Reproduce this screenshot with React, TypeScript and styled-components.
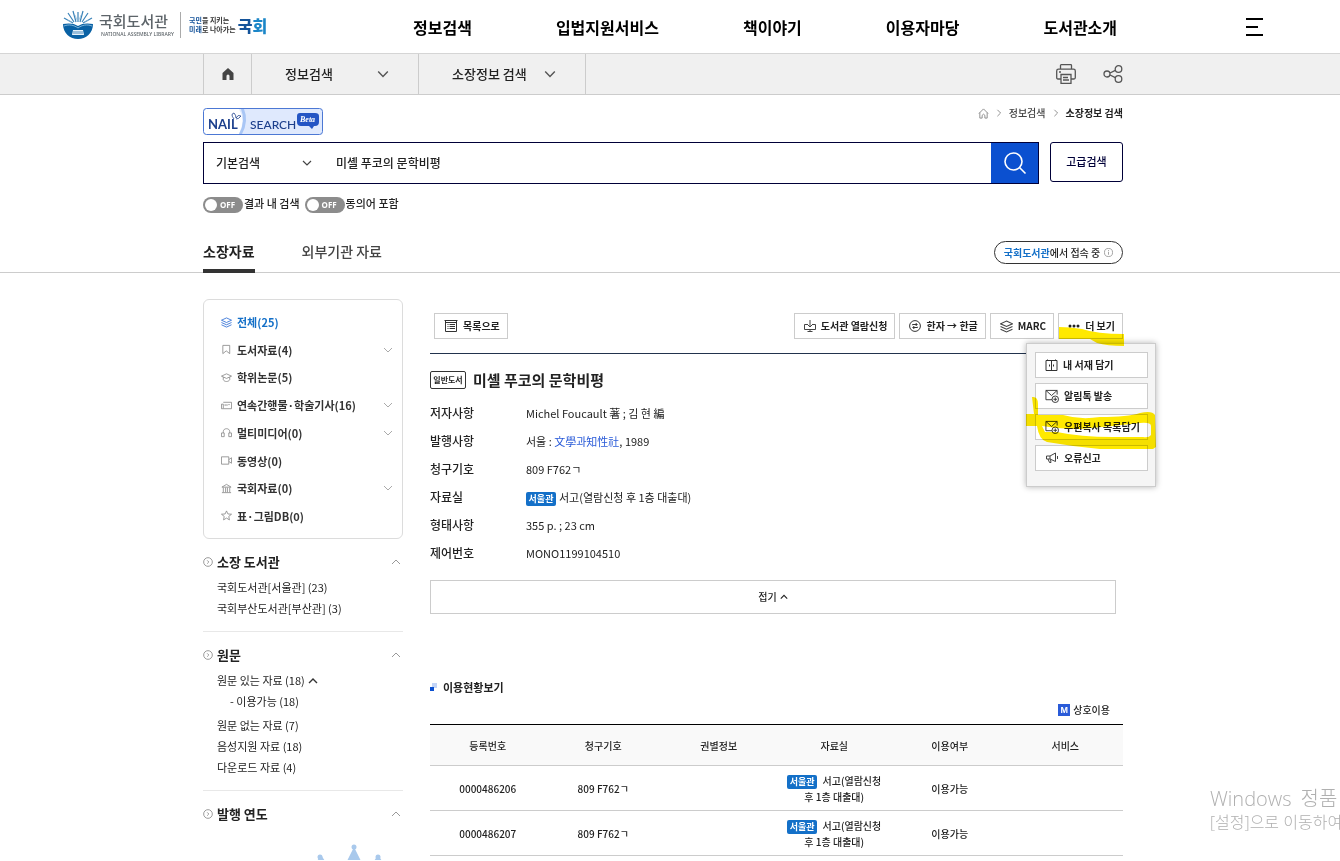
import React from "react";
import styled, { createGlobalStyle, css } from "styled-components";

const GlobalStyle = createGlobalStyle`
  *, *::before, *::after { box-sizing: border-box; }
  body {
    margin: 0;
    background: #fff;
    color: #222;
    font-family: "Noto Sans CJK KR", "Noto Sans", sans-serif;
    font-size: 12px;
    line-height: 20px;
  }
  a { color: inherit; text-decoration: none; }
  button, input, select { font: inherit; color: inherit; }
  button { cursor: pointer; }
  h1, h2, h3, ul, dl, dd, p { margin: 0; padding: 0; }
  ul { list-style: none; }
  svg { display: block; flex: none; }
`;

/* ---------- shared ---------- */

const Page = styled.div`
  position: relative;
  min-height: 100vh;
  overflow: hidden;
`;

const Band = styled.div`
  padding-right: 14px;
`;

const Container = styled.div<{ $wide?: boolean }>`
  max-width: ${(p) => (p.$wide ? 1200 : 920)}px;
  margin: 0 auto;
`;

type Dir = "up" | "down" | "right";
const chevronPaths: Record<Dir, string> = {
  down: "M1 3 L5 7 L9 3",
  up: "M1 7 L5 3 L9 7",
  right: "M3 1 L7 5 L3 9",
};
const Chevron = ({ dir, size = 10, color = "#999", weight = 1 }: { dir: Dir; size?: number; color?: string; weight?: number }) => (
  <svg width={size} height={size} viewBox="0 0 10 10" fill="none" stroke={color} strokeWidth={weight} aria-hidden="true">
    <path d={chevronPaths[dir]} />
  </svg>
);

/* ---------- header ---------- */

const Header = styled(Band)`
  border-bottom: 1px solid #d5d5d5;
`;
const HeaderRow = styled(Container)`
  display: flex;
  align-items: center;
  height: 53px;
`;
const Brand = styled.a`
  display: flex;
  align-items: center;
  flex: 0 0 350px;
  padding-bottom: 4px;
`;
const BrandName = styled.span`
  display: flex;
  flex-direction: column;
  margin-left: 6px;
  width: 82px;
  border-right: 1px solid #aaa;
  color: #5d6469;
  font-size: 15px;
  font-weight: 500;
  line-height: 18px;
`;
const BrandSub = styled.span`
  padding-left: 2px;
  font-family: "Noto Sans", sans-serif;
  font-size: 5px;
  font-weight: 500;
  line-height: 8px;
  white-space: nowrap;
`;
const Slogan = styled.span`
  margin-left: 8px;
  color: #333;
  font-size: 7px;
  font-weight: 700;
  line-height: 9px;
  white-space: nowrap;
  em { color: #14539a; font-style: normal; }
`;
const SloganMark = styled.span`
  margin-left: 2px;
  color: #14539a;
  font-size: 16px;
  font-weight: 900;
  line-height: 20px;
  span { color: #1b86c8; }
`;
const MainNav = styled.nav`
  display: flex;
  flex: 1;
  gap: 84px;
  font-size: 16px;
  font-weight: 700;
  line-height: 24px;
  white-space: nowrap;
  color: #000;
`;
const MenuButton = styled.button`
  padding: 0;
  border: 0;
  background: none;
`;

const Emblem = () => (
  <svg width="30" height="30" viewBox="0 0 30 30" aria-hidden="true">
    <g stroke="#3b83b8" strokeWidth="1.2" fill="none">
      <path d="M15 12V2M13 12L10 1M17 12L20 1M11 12L5 3M19 12L25 3M10 13L1 8M20 13L29 8" />
      <path d="M14 10L12 5M16 10L18 5M9 12L4 10M21 12L26 10" strokeWidth=".7" stroke="#8fb9d8" />
    </g>
    <path d="M0 14C5 13 11 13 15 16C19 13 25 13 30 14C30 23 23 29 15 29S0 23 0 14Z" fill="#0961a4" />
    <path d="M1 16C6 14 11 15 15 18C19 15 24 14 29 16" fill="none" stroke="#9cc9e6" strokeWidth=".8" />
    <path d="M10 20H20L21 25H9Z" fill="#e6f2fa" />
    <path d="M11 21V24M13 21V24M15 21V24M17 21V24M19 21V24" stroke="#0961a4" strokeWidth=".7" />
  </svg>
);

/* ---------- location bar ---------- */

const LocationBar = styled(Band)`
  background: #f0f0f0;
  border-bottom: 1px solid #ccc;
`;
const LocationRow = styled(Container)`
  display: flex;
  height: 40px;
`;
const HomeCell = styled.a`
  display: flex;
  align-items: center;
  justify-content: center;
  width: 49px;
  border: solid #ccc;
  border-width: 0 1px;
`;
const LocationCell = styled.button`
  display: flex;
  align-items: center;
  justify-content: space-between;
  width: 167px;
  padding: 0 29px 0 33px;
  border: 0;
  border-right: 1px solid #ccc;
  background: none;
  color: #222;
  font-size: 13px;
  font-weight: 500;
  white-space: nowrap;
`;
const LocationTools = styled.div`
  display: flex;
  align-items: center;
  gap: 27px;
  margin-left: auto;
`;
const PlainButton = styled.button`
  padding: 0;
  border: 0;
  background: none;
`;

/* ---------- search ---------- */

const TopLine = styled.div`
  display: flex;
  justify-content: space-between;
  padding-top: 13px;
  height: 47px;
`;
const Crumbs = styled.nav`
  display: flex;
  align-items: center;
  gap: 6px;
  height: 10px;
  color: #444;
  font-size: 10px;
  font-weight: 500;
  white-space: nowrap;
  strong { color: #222; font-weight: 700; }
`;
const SearchRow = styled.form`
  display: flex;
  align-items: flex-start;
  gap: 11px;
`;
const SearchBox = styled.div`
  display: flex;
  flex: 1;
  height: 42px;
  border: 1px solid #000038;
  font-weight: 500;
`;
const SelectWrap = styled.div`
  position: relative;
  flex: 0 0 120px;
  svg { position: absolute; right: 12px; top: 15px; pointer-events: none; }
`;
const Select = styled.select`
  width: 100%;
  height: 100%;
  padding: 0 12px;
  border: 0;
  appearance: none;
  background: none;
`;
const SearchInput = styled.input`
  flex: 1;
  min-width: 0;
  padding: 0 12px;
  border: 0;
  background: none;
`;
const SearchButton = styled.button`
  display: flex;
  align-items: center;
  justify-content: center;
  width: 47px;
  padding: 0;
  border: 0;
  background: #0b50d0;
`;
const AdvancedButton = styled.button`
  width: 73px;
  height: 40px;
  padding: 0 0 2px;
  border: 1px solid #000038;
  border-radius: 3px;
  background: #fff;
  color: #000038;
  font-size: 11px;
  font-weight: 500;
`;
const Options = styled.div`
  display: flex;
  gap: 5px;
  padding-top: 10px;
  height: 46px;
`;
const Toggle = styled.label`
  display: flex;
  align-items: flex-start;
  position: relative;
  font-size: 11px;
  font-weight: 500;
  line-height: 18px;
  gap: 1px;
  input { position: absolute; inset: 0; margin: 0; opacity: 0; }
`;
const Track = styled.span`
  display: flex;
  align-items: center;
  gap: 3px;
  width: 40px;
  height: 16px;
  margin-top: 3px;
  padding-left: 2px;
  border-radius: 8px;
  background: #8c8c8c;
  color: #fff;
  font-family: "Noto Sans", sans-serif;
  font-size: 8px;
  font-weight: 700;
  &::before {
    content: "";
    width: 12px;
    height: 12px;
    border-radius: 50%;
    background: #fff;
  }
`;

/* ---------- tabs ---------- */

const TabBand = styled(Band)`
  border-bottom: 1px solid #ccc;
`;
const TabRow = styled(Container)`
  display: flex;
  align-items: flex-start;
  gap: 47px;
  height: 42px;
  padding-top: 11px;
`;
const Tab = styled.a<{ $active?: boolean }>`
  height: 32px;
  color: ${(p) => (p.$active ? "#222" : "#444")};
  font-size: 14px;
  font-weight: ${(p) => (p.$active ? 700 : 500)};
  line-height: 20px;
  border-bottom: 4px solid ${(p) => (p.$active ? "#333" : "transparent")};
`;
const AccessPill = styled.button`
  display: flex;
  align-items: center;
  justify-content: center;
  gap: 4px;
  width: 129px;
  height: 23px;
  margin-left: auto;
  padding: 0;
  border: 1px solid #333;
  border-radius: 12px;
  background: #fff;
  font-size: 10px;
  font-weight: 500;
  white-space: nowrap;
  b { color: #1470c8; font-weight: 700; }
`;

/* ---------- sidebar ---------- */

const Columns = styled(Container)`
  display: flex;
  align-items: flex-start;
  gap: 27px;
  padding-top: 26px;
`;
const Sidebar = styled.aside`
  flex: 0 0 200px;
`;
const CategoryList = styled.ul`
  display: flex;
  flex-direction: column;
  justify-content: space-between;
  min-height: 240px;
  padding: 12px 9px 12px 17px;
  border: 1px solid #dcdcdc;
  border-radius: 6px;
`;
const Category = styled.li<{ $active?: boolean }>`
  display: flex;
  align-items: center;
  height: 20px;
  font-size: 11px;
  font-weight: 700;
  color: ${(p) => (p.$active ? "#1470c8" : "#333")};
  a { flex: 1; margin-left: 5px; }
`;
const Facet = styled.section<{ $last?: boolean }>`
  padding: 13px 0 12px;
  ${(p) => !p.$last && css`border-bottom: 1px solid #e8e8e8;`}
`;
const FacetHead = styled.h3`
  display: flex;
  align-items: center;
  gap: 4px;
  margin-bottom: 5px;
  padding-right: 2px;
  font-size: 13px;
  font-weight: 700;
  span { flex: 1; }
`;
const FacetList = styled.ul`
  padding-left: 14px;
  font-size: 11px;
  line-height: 21px;
`;
const FacetItem = styled.li`
  display: flex;
  align-items: center;
  gap: 3px;
`;
const SubItem = styled.li`
  padding: 0 0 4px 13px;
  line-height: 20px;
`;

/* ---------- record ---------- */

const Main = styled.main`
  flex: 1;
  min-width: 0;
`;
const Toolbar = styled.div`
  display: flex;
  gap: 4px;
  padding: 14px 0 14px 4px;
  border-bottom: 1px solid #22334d;
`;
const ToolButton = styled.button<{ $block?: boolean }>`
  display: flex;
  align-items: center;
  gap: 5px;
  width: ${(p) => (p.$block ? "100%" : "auto")};
  height: 26px;
  padding: 0 7px 0 9px;
  border: 1px solid #ccc;
  background: #fff;
  color: #222;
  font-size: 10px;
  font-weight: 700;
  white-space: nowrap;
`;
const ToolGap = styled.div`
  flex: 1;
`;
const MoreAnchor = styled.div`
  position: relative;
`;
const MoreMenu = styled.div`
  position: absolute;
  top: 30px;
  right: -33px;
  z-index: 2;
  display: flex;
  flex-direction: column;
  gap: 5px;
  width: 130px;
  height: 144px;
  padding: 8px 7px 0 8px;
  border: 1px solid #ccc;
  background: #f5f5f5;
  box-shadow: 0 0 6px rgba(0, 0, 0, 0.3);
`;
const Marker = styled.svg`
  position: absolute;
  top: 0;
  right: -34px;
  z-index: 3;
  mix-blend-mode: multiply;
  pointer-events: none;
`;
const TitleRow = styled.div`
  display: flex;
  align-items: center;
  gap: 7px;
  padding: 14px 0 7px;
`;
const KindBadge = styled.span`
  width: 36px;
  height: 18px;
  border: 1px solid #333;
  border-radius: 2px;
  font-size: 8px;
  font-weight: 700;
  line-height: 15px;
  text-align: center;
  white-space: nowrap;
`;
const Title = styled.h1`
  font-size: 15px;
  font-weight: 700;
  line-height: 24px;
`;
const Fields = styled.dl`
  display: grid;
  grid-template-columns: 96px 1fr;
  font-size: 11px;
  line-height: 28px;
  dt { font-size: 12px; font-weight: 500; }
  a { color: #2a5bd8; }
`;
const SiteBadge = styled.span`
  display: inline-block;
  width: 30px;
  height: 14px;
  margin-right: 3px;
  border-radius: 2px;
  background: #1470c8;
  color: #fff;
  font-size: 9px;
  font-weight: 700;
  line-height: 14px;
  text-align: center;
  vertical-align: middle;
`;
const FoldButton = styled.button`
  display: flex;
  align-items: center;
  justify-content: center;
  gap: 3px;
  width: calc(100% - 7px);
  height: 34px;
  margin-top: 13px;
  padding: 0;
  border: 1px solid #ccc;
  background: #fff;
  font-size: 10px;
  font-weight: 500;
`;
const StatusHead = styled.h2`
  display: flex;
  align-items: center;
  gap: 6px;
  margin-top: 63px;
  font-size: 11px;
  font-weight: 700;
`;
const Legend = styled.p`
  display: flex;
  align-items: center;
  justify-content: flex-end;
  gap: 3px;
  margin: 3px 13px 4px 0;
  font-size: 10px;
  font-weight: 500;
`;
const LegendMark = styled.span`
  width: 12px;
  height: 12px;
  background: #2a5bd8;
  color: #fff;
  font-family: "Liberation Sans", sans-serif;
  font-size: 9px;
  font-weight: 700;
  line-height: 12px;
  text-align: center;
`;
const StatusTable = styled.table`
  width: 100%;
  table-layout: fixed;
  border-collapse: collapse;
  border-top: 1px solid #000;
  font-size: 10px;
  font-weight: 500;
  line-height: 16px;
  text-align: center;
  th { height: 41px; padding: 2px 0 0; background: #f9f9f9; font-weight: 500; }
  td { height: 45px; padding: 2px 8px 0; }
  tr { border-bottom: 1px solid #ccc; }
`;

const Watermark = styled.div`
  position: absolute;
  top: 786px;
  left: calc(100% - 130px);
  color: #b0b0b0;
  font-family: "Open Sans", "Noto Sans CJK KR", sans-serif;
  font-weight: 300;
  font-size: 16px;
  line-height: 20px;
  white-space: nowrap;
  p:first-child { display: flex; gap: 9px; font-size: 20px; line-height: 26px; }
`;

/* ---------- drawings ---------- */

const Glyph = ({ size = 12, box = 12, color = "#888", weight = 1, children }: { size?: number; box?: number; color?: string; weight?: number; children: React.ReactNode }) => (
  <svg width={size} height={size} viewBox={`0 0 ${box} ${box}`} fill="none" stroke={color} strokeWidth={weight} aria-hidden="true">
    {children}
  </svg>
);

const layers = <path d="M6 1L11.5 3.5L6 6L.5 3.5ZM.5 6L6 8.5L11.5 6M.5 8.5L6 11L11.5 8.5" />;
const mail = (
  <>
    <path d="M7.5 11.5H1V1.5H13V6M1 1.5L7 7L13 1.5" />
    <circle cx="11" cy="11" r="3.5" />
    <path d="M11 9V13M9 11H13" />
  </>
);

const categories: { label: string; icon: React.ReactNode; open?: boolean; active?: boolean }[] = [
  { label: "전체(25)", icon: layers, active: true },
  { label: "도서자료(4)", icon: <path d="M2 1.5H9.5V10.5L5.7 7.5L2 10.5Z" />, open: true },
  { label: "학위논문(5)", icon: <path d="M.5 4.5L6 2L11.5 4.5L6 7ZM2.5 5.5V8.5C4 11 8 11 9.5 8.5V5.5" /> },
  { label: "연속간행물·학술기사(16)", icon: <path d="M2.5 2.5H11.5V9.5H.5V4.5H2.5V9M4.5 4.5V6.5M6.5 4.5V6.5M8 5H9.5" />, open: true },
  { label: "멀티미디어(0)", icon: <path d="M3.5 10.5V6.5H.5V10.5H3.5M8.5 10.5V6.5H11.5V10.5H8.5M2.5 6.5V5C2.5 .8 9.5 .8 9.5 5V6.5" />, open: true },
  { label: "동영상(0)", icon: <path d="M.5 2H8.5V10H.5ZM8.5 5L11.5 3V9L8.5 7" /> },
  { label: "국회자료(0)", icon: <path d="M1 4.5L6 1.5L11 4.5ZM1 10.5H11M2.5 5V10M5 5V10M7 5V10M9.5 5V10" />, open: true },
  { label: "표·그림DB(0)", icon: <path d="M6 1L7.5 4.3L11.5 4.6L8.5 7L9.2 10.8L6 8.8L2.8 10.8L3.5 7L.5 4.6L4.5 4.3Z" /> },
];

const FacetTitle = ({ children }: { children: React.ReactNode }) => (
  <FacetHead>
    <Glyph size={10}>
      <circle cx="6" cy="6" r="5.2" />
      <path d="M5 4L7 6L5 8" />
    </Glyph>
    <span>{children}</span>
    <Chevron dir="up" color="#999" />
  </FacetHead>
);

const holdings = ["0000486206", "0000486207"];

export default function App() {
  return (
    <Page>
      <GlobalStyle />
      <Header as="header">
        <HeaderRow $wide>
          <Brand href="#">
            <Emblem />
            <BrandName>
              국회도서관
              <BrandSub>NATIONAL ASSEMBLY LIBRARY</BrandSub>
            </BrandName>
            <Slogan>
              <em>국민</em>을 지키는
              <br />
              <em>미래</em>로 나아가는
            </Slogan>
            <SloganMark>
              국<span>회</span>
            </SloganMark>
          </Brand>
          <MainNav>
            {["정보검색", "입법지원서비스", "책이야기", "이용자마당", "도서관소개"].map((t) => (
              <a href="#" key={t}>{t}</a>
            ))}
          </MainNav>
          <MenuButton aria-label="전체메뉴">
            <svg width="17" height="18" viewBox="0 0 17 18" stroke="#000" strokeWidth="2">
              <path d="M0 1H17M0 9H12M0 17H17" />
            </svg>
          </MenuButton>
        </HeaderRow>
      </Header>

      <LocationBar>
        <LocationRow>
          <HomeCell href="#" aria-label="홈">
            <svg width="12" height="12" viewBox="0 0 12 12" fill="#444">
              <path d="M6 0L11.5 5V12H7.5V8A1.5 1.5 0 0 0 4.5 8V12H.5V5Z" />
            </svg>
          </HomeCell>
          <LocationCell>정보검색<Chevron dir="down" size={12} color="#555" weight={1.2} /></LocationCell>
          <LocationCell>소장정보 검색<Chevron dir="down" size={12} color="#555" weight={1.2} /></LocationCell>
          <LocationTools>
            <PlainButton aria-label="인쇄">
              <Glyph size={20} box={20} color="#555" weight={1.3}>
                <path d="M4.5 5V1.5Q4.5 .7 5.3 .7H14.7Q15.5 .7 15.5 1.5V5M5 15H2Q.7 15 .7 13.5V7Q.7 5.2 2.5 5.2H17.5Q19.3 5.2 19.3 7V13.5Q19.3 15 18 15H15M5 10.5H15V19.3H5ZM7 13.5H12M7 16H13M3 8H5" />
              </Glyph>
            </PlainButton>
            <PlainButton aria-label="공유">
              <Glyph size={20} box={20} color="#555" weight={1.3}>
                <circle cx="4" cy="10" r="3" />
                <circle cx="15.5" cy="5" r="3.3" />
                <circle cx="15.5" cy="15" r="3.3" />
                <path d="M7 9L12.3 6.3M7 11L12.3 13.7" />
              </Glyph>
            </PlainButton>
          </LocationTools>
        </LocationRow>
      </LocationBar>

      <Band>
        <Container>
          <TopLine>
            <a href="#" aria-label="NAIL SEARCH">
              <svg width="120" height="27" viewBox="0 0 120 27">
                <rect x=".5" y=".5" width="119" height="26" rx="3" fill="#dfe9fd" />
                <path d="M3 1H36Q43 12 36 26H3Q1 26 1 24V3Q1 1 3 1Z" fill="#fff" />
                <path d="M38 1H41Q46 13 39 26H36Q43 13 38 1Z" fill="#a9c6f5" />
                <rect x=".5" y=".5" width="119" height="26" rx="3" fill="none" stroke="#4c78d4" />
                <g fill="#1c3f8c" fontFamily="Lato, sans-serif">
                  <text x="5" y="21" fontSize="13" fontWeight="700">NAIL</text>
                  <text x="47" y="21" fontSize="12" fontWeight="500">SEARCH</text>
                </g>
                <path d="M31 11Q27 6 31 5Q33 7 33 10Q35 6 38 8Q36 11 33 11" fill="none" stroke="#1c3f8c" strokeWidth=".8" />
                <path d="M97 5H112Q116 5 116 8V14Q116 18 112 18H111L109 21L106 18H98Q94 18 94 14V8Q94 5 97 5Z" fill="#2455c4" />
                <text x="97" y="14" fontSize="8" fontStyle="italic" fontWeight="700" fill="#fff" fontFamily="Liberation Serif, serif">Beta</text>
              </svg>
            </a>
            <Crumbs>
              <Glyph size={11}>
                <path d="M1 6L6 1L11 6M2 5V11H4.5V8Q6 5.5 7.5 8V11H10V5" />
              </Glyph>
              <Chevron dir="right" size={8} color="#777" />
              <a href="#">정보검색</a>
              <Chevron dir="right" size={8} color="#777" />
              <strong>소장정보 검색</strong>
            </Crumbs>
          </TopLine>
          <SearchRow onSubmit={(e) => e.preventDefault()}>
            <SearchBox>
              <SelectWrap>
                <Select aria-label="검색 구분"><option>기본검색</option></Select>
                <Chevron dir="down" color="#444" weight={1.2} />
              </SelectWrap>
              <SearchInput aria-label="검색어" defaultValue="미셸 푸코의 문학비평" />
              <SearchButton aria-label="검색">
                <Glyph size={24} box={24} color="#fff" weight={1.6}>
                  <circle cx="10.5" cy="10.5" r="8.5" />
                  <path d="M16.5 16.5L22.5 22.5" />
                </Glyph>
              </SearchButton>
            </SearchBox>
            <AdvancedButton type="button">고급검색</AdvancedButton>
          </SearchRow>
          <Options>
            <Toggle><input type="checkbox" /><Track>OFF</Track>결과 내 검색</Toggle>
            <Toggle><input type="checkbox" /><Track>OFF</Track>동의어 포함</Toggle>
          </Options>
        </Container>
      </Band>

      <TabBand>
        <TabRow>
          <Tab href="#" $active>소장자료</Tab>
          <Tab href="#">외부기관 자료</Tab>
          <AccessPill>
            <span><b>국회도서관</b>에서 접속 중</span>
            <Glyph size={9}>
              <circle cx="6" cy="6" r="5.4" />
              <path d="M6 5V9M6 2.8V4" />
            </Glyph>
          </AccessPill>
        </TabRow>
      </TabBand>

      <Band>
        <Columns>
          <Sidebar>
            <CategoryList>
              {categories.map((c) => (
                <Category key={c.label} $active={c.active}>
                  <Glyph size={11} color={c.active ? "#2a6bd4" : "#888"} weight={0.9}>{c.icon}</Glyph>
                  <a href="#">{c.label}</a>
                  {c.open && <Chevron dir="down" color="#aaa" />}
                </Category>
              ))}
            </CategoryList>
            <Facet>
              <FacetTitle>소장 도서관</FacetTitle>
              <FacetList>
                <FacetItem><a href="#">국회도서관[서울관] (23)</a></FacetItem>
                <FacetItem><a href="#">국회부산도서관[부산관] (3)</a></FacetItem>
              </FacetList>
            </Facet>
            <Facet>
              <FacetTitle>원문</FacetTitle>
              <FacetList>
                <FacetItem><a href="#">원문 있는 자료 (18)</a><Chevron dir="up" color="#333" weight={1.4} /></FacetItem>
                <SubItem><a href="#">- 이용가능 (18)</a></SubItem>
                <FacetItem><a href="#">원문 없는 자료 (7)</a></FacetItem>
                <FacetItem><a href="#">음성지원 자료 (18)</a></FacetItem>
                <FacetItem><a href="#">다운로드 자료 (4)</a></FacetItem>
              </FacetList>
            </Facet>
            <Facet $last>
              <FacetTitle>발행 연도</FacetTitle>
              <svg width="200" height="31" viewBox="0 829 200 31" fill="#a9c9ec">
                <path d="M114 861L118 855L122 861ZM144 861L151 847L158 861ZM171 861L175 855L179 861Z" />
                <circle cx="117" cy="857" r="2.5" />
                <circle cx="151" cy="847" r="2.5" />
                <circle cx="175" cy="857" r="2.5" />
              </svg>
            </Facet>
          </Sidebar>

          <Main>
            <Toolbar>
              <ToolButton>
                <Glyph size={14} box={14} color="#333">
                  <path d="M.5 1.5H13.5M1.5 1.5V12.5H12.5V1.5M1.5 3.5H12.5M3.5 5.5H4.5M5.5 5.5H11M3.5 7.5H4.5M5.5 7.5H11M3.5 9.5H4.5M5.5 9.5H11" />
                </Glyph>
                목록으로
              </ToolButton>
              <ToolGap />
              <ToolButton>
                <Glyph size={12} color="#444">
                  <path d="M4 4.5H.5V9.5H11.5V4.5H8M6 0V7M4 5L6 7L8 5M6 9.5V11.5M3.5 11.5H8.5" />
                </Glyph>
                도서관 열람신청
              </ToolButton>
              <ToolButton>
                <Glyph size={12} color="#333">
                  <circle cx="6" cy="6" r="5.4" />
                  <path d="M3.5 5.2V4.5H8M6.7 3L8.2 4.5L6.7 6M8.5 6.8V7.5H4M5.3 6L3.8 7.5L5.3 9" />
                </Glyph>
                한자 → 한글
              </ToolButton>
              <ToolButton>
                <Glyph size={13} color="#444">{layers}</Glyph>
                MARC
              </ToolButton>
              <MoreAnchor>
                <ToolButton aria-expanded="true">
                  <svg width="12" height="4" viewBox="0 0 12 4" fill="#222">
                    <circle cx="2" cy="2" r="1.5" /><circle cx="6" cy="2" r="1.5" /><circle cx="10" cy="2" r="1.5" />
                  </svg>
                  더 보기
                </ToolButton>
                <MoreMenu>
                  <ToolButton $block>
                    <Glyph size={13} box={13} color="#333">
                      <path d="M1 1.5H12V11.5H1ZM6.5 1.5V11.5M4.5 5.5V7.5M8.5 5.5V7.5M2.5 .5V1.5M10.5 .5V1.5" />
                    </Glyph>
                    내 서재 담기
                  </ToolButton>
                  <ToolButton $block><Glyph size={14} box={15} color="#333">{mail}</Glyph>알림톡 발송</ToolButton>
                  <ToolButton $block><Glyph size={14} box={15} color="#333">{mail}</Glyph>우편복사 목록담기</ToolButton>
                  <ToolButton $block>
                    <Glyph size={14} box={14} color="#444">
                      <path d="M1.5 5H5L10.5 2V10.5L5 8H1.5ZM5 5V8M3 8L4.5 11.5H6L5.5 8.5M12.5 5V8" />
                    </Glyph>
                    오류신고
                  </ToolButton>
                </MoreMenu>
                <Marker width="131" height="140" viewBox="1026 313 131 140" fill="#ffe900" aria-hidden="true">
                  <path d="M1059 327Q1070 327 1082 329Q1097 334 1124 334V346Q1107 346 1097 343L1090 339H1059Z" />
                  <path fillRule="evenodd" d="M1032 397Q1038 396 1038 404V415H1043L1063 415Q1080 420 1100 417Q1128 417 1140 413Q1152 410 1155 415L1156 447L1153 449H1100L1073 446L1047 442Q1039 440 1037 426H1026V414H1034Z M1042 426Q1060 429 1080 429L1113 426L1140 423Q1151 422 1151 426V435Q1149 438 1143 437H1113Q1080 437 1057 432L1045 432Z" />
                </Marker>
              </MoreAnchor>
            </Toolbar>

            <TitleRow>
              <KindBadge>일반도서</KindBadge>
              <Title>미셸 푸코의 문학비평</Title>
            </TitleRow>
            <Fields>
              <dt>저자사항</dt><dd>Michel Foucault 著 ; 김 현 編</dd>
              <dt>발행사항</dt><dd>서울 : <a href="#">文學과知性社</a>, 1989</dd>
              <dt>청구기호</dt><dd>809 F762ㄱ</dd>
              <dt>자료실</dt><dd><SiteBadge>서울관</SiteBadge>서고(열람신청 후 1층 대출대)</dd>
              <dt>형태사항</dt><dd>355 p. ; 23 cm</dd>
              <dt>제어번호</dt><dd>MONO1199104510</dd>
            </Fields>
            <FoldButton>접기<Chevron dir="up" size={8} color="#222" weight={1.4} /></FoldButton>

            <StatusHead>
              <svg width="7" height="8" viewBox="0 0 7 8">
                <path d="M2 0H7V5H2Z" fill="#c3d5f7" />
                <path d="M0 4H4V8H0Z" fill="#0b50d0" />
              </svg>
              이용현황보기
            </StatusHead>
            <Legend><LegendMark>M</LegendMark>상호이용</Legend>
            <StatusTable>
              <thead>
                <tr>
                  {["등록번호", "청구기호", "권별정보", "자료실", "이용여부", "서비스"].map((h) => (
                    <th key={h} scope="col">{h}</th>
                  ))}
                </tr>
              </thead>
              <tbody>
                {holdings.map((n) => (
                  <tr key={n}>
                    <td>{n}</td>
                    <td>809 F762ㄱ</td>
                    <td />
                    <td><SiteBadge>서울관</SiteBadge> 서고(열람신청<br />후 1층 대출대)</td>
                    <td>이용가능</td>
                    <td />
                  </tr>
                ))}
              </tbody>
            </StatusTable>
          </Main>
        </Columns>
      </Band>

      <Watermark>
        <p><span>Windows</span><span>정품</span></p>
        <p>[설정]으로 이동하여</p>
      </Watermark>
    </Page>
  );
}
